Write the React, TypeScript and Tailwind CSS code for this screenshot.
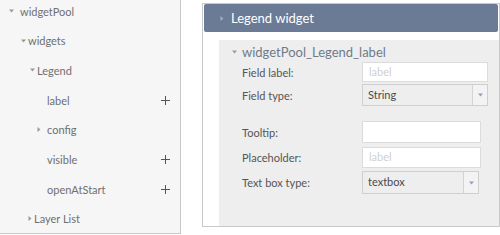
import React from "react";

const font = { fontFamily: "Lato, 'Open Sans', sans-serif" };

function TriDown({ className = "" }: { className?: string }) {
  return (
    <svg width="5" height="4" viewBox="0 0 5 4" className={className}>
      <path d="M0 0.5h5L2.5 3.5z" fill="currentColor" />
    </svg>
  );
}

function TriRight({ className = "" }: { className?: string }) {
  return (
    <svg width="4" height="5" viewBox="0 0 4 5" className={className}>
      <path d="M0.5 0v5L3.5 2.5z" fill="currentColor" />
    </svg>
  );
}

function Plus() {
  return (
    <svg width="9" height="9" viewBox="0 0 9 9" className="text-[#555]">
      <path d="M4.5 0v9M0 4.5h9" stroke="currentColor" strokeWidth="1" />
    </svg>
  );
}

type Node = {
  label: string;
  tri?: "down" | "right";
  triX?: number;
  textX: number;
  plus?: boolean;
};

const tree: Node[] = [
  { label: "widgetPool", tri: "down", triX: 9, textX: 20 },
  { label: "widgets", tri: "down", triX: 21, textX: 28 },
  { label: "Legend", tri: "down", triX: 30, textX: 37 },
  { label: "label", textX: 47, plus: true },
  { label: "config", tri: "right", triX: 37, textX: 47 },
  { label: "visible", textX: 47, plus: true },
  { label: "openAtStart", textX: 47, plus: true },
  { label: "Layer List", tri: "right", triX: 28, textX: 34 },
];

function TreeRow({ n }: { n: Node }) {
  return (
    <div className="relative h-[22px] flex items-center text-[11px] text-[#6f6f6f]">
      {n.tri && (
        <span className="absolute flex items-center text-[#999]" style={{ left: n.triX }}>
          {n.tri === "down" ? <TriDown /> : <TriRight />}
        </span>
      )}
      <span className="absolute leading-none" style={{ left: n.textX }}>
        {n.label}
      </span>
      {n.plus && (
        <span className="absolute left-[161px] flex items-center">
          <Plus />
        </span>
      )}
    </div>
  );
}

function TextInput({ placeholder, width, height }: { placeholder?: string; width: number; height: number }) {
  return (
    <div
      className="bg-white border border-[#dcdcdc] flex items-center pl-[6px] text-[11px] text-[#d0d0d0]"
      style={{ width, height }}
    >
      {placeholder}
    </div>
  );
}

function Select({ value, width, height }: { value: string; width: number; height: number }) {
  return (
    <div
      className="bg-[#eeeeee] border border-[#cfcfcf] flex items-stretch text-[11px] text-[#4a4a4a]"
      style={{ width, height }}
    >
      <div className="flex-1 flex items-center pl-[5px]">{value}</div>
      <div className="w-[15px] border-l border-[#d4d4d4] bg-[#f3f3f3] flex items-center justify-center text-[#8fa0bd]">
        <TriDown />
      </div>
    </div>
  );
}

function Row({ label, children, h, mt }: { label: string; children: React.ReactNode; h: number; mt: number }) {
  return (
    <div className="flex items-center" style={{ height: h, marginTop: mt }}>
      <div className="w-[143px] pl-[23px] text-[11px] text-[#555] leading-none">{label}</div>
      {children}
    </div>
  );
}

export default function App() {
  return (
    <div className="w-[500px] h-[235px] bg-white flex items-start" style={font}>
      <div className="w-[181px] h-[234px] bg-[#f6f6f6] border-r border-b border-[#c8c8c8] flex flex-col gap-[7.7px]">
        {tree.map((n) => (
          <TreeRow key={n.label} n={n} />
        ))}
      </div>

      <div className="ml-[21px] mt-[3px] w-[298px] h-[224px] border border-[#c9c9c9] bg-white flex flex-col">
        <div className="mx-[1px] h-[28px] rounded-[2px] bg-[#6b7a95] flex items-center pl-[16px]">
          <span className="text-[#a3adbf]">
            <TriRight />
          </span>
          <span className="ml-[7px] text-[13px] text-white leading-none">Legend widget</span>
        </div>
        <div className="ml-[16px] mt-[8px] flex-1 bg-[#eeeeee] flex flex-col">
          <div className="h-[20px] mt-[2px] flex items-center pl-[13px] text-[#999]">
            <TriDown />
            <span className="ml-[5px] text-[13px] text-[#707a89] leading-none">widgetPool_Legend_label</span>
          </div>
          <Row label="Field label:" h={20} mt={0}>
            <TextInput placeholder="label" width={126} height={20} />
          </Row>
          <Row label="Field type:" h={22} mt={2}>
            <Select value="String" width={126} height={22} />
          </Row>
          <Row label="Tooltip:" h={22} mt={15}>
            <TextInput width={119} height={22} />
          </Row>
          <Row label="Placeholder:" h={21} mt={4}>
            <TextInput placeholder="label" width={119} height={21} />
          </Row>
          <Row label="Text box type:" h={23} mt={3}>
            <Select value="textbox" width={117} height={23} />
          </Row>
        </div>
      </div>
    </div>
  );
}
